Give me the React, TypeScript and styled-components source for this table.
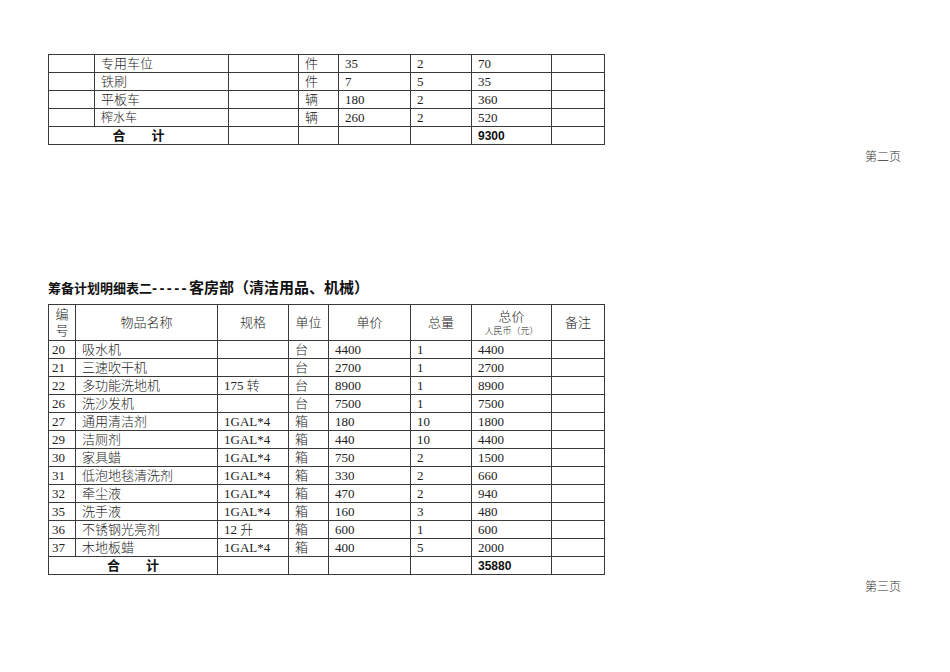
import React from 'react';
import styled, { createGlobalStyle } from 'styled-components';

const GlobalStyle = createGlobalStyle`
  html, body {
    margin: 0;
    padding: 0;
    background: #ffffff;
  }
  body {
    font-family: "Liberation Serif", "Noto Sans CJK SC", serif;
    color: #222;
  }
`;

type Row = {
  no?: string;
  name: string;
  spec?: string;
  unit: string;
  price: string;
  qty: string;
  total: string;
  small?: boolean;
};

const pageTwoRows: Row[] = [
  { name: '专用车位', unit: '件', price: '35', qty: '2', total: '70' },
  { name: '铁刷', unit: '件', price: '7', qty: '5', total: '35' },
  { name: '平板车', unit: '辆', price: '180', qty: '2', total: '360' },
  { name: '榨水车', unit: '辆', price: '260', qty: '2', total: '520', small: true },
];

const pageThreeRows: Row[] = [
  { no: '20', name: '吸水机', unit: '台', price: '4400', qty: '1', total: '4400' },
  { no: '21', name: '三速吹干机', unit: '台', price: '2700', qty: '1', total: '2700' },
  { no: '22', name: '多功能洗地机', spec: '175 转', unit: '台', price: '8900', qty: '1', total: '8900' },
  { no: '26', name: '洗沙发机', unit: '台', price: '7500', qty: '1', total: '7500' },
  { no: '27', name: '通用清洁剂', spec: '1GAL*4', unit: '箱', price: '180', qty: '10', total: '1800' },
  { no: '29', name: '洁厕剂', spec: '1GAL*4', unit: '箱', price: '440', qty: '10', total: '4400' },
  { no: '30', name: '家具蜡', spec: '1GAL*4', unit: '箱', price: '750', qty: '2', total: '1500' },
  { no: '31', name: '低泡地毯清洗剂', spec: '1GAL*4', unit: '箱', price: '330', qty: '2', total: '660' },
  { no: '32', name: '牵尘液', spec: '1GAL*4', unit: '箱', price: '470', qty: '2', total: '940' },
  { no: '35', name: '洗手液', spec: '1GAL*4', unit: '箱', price: '160', qty: '3', total: '480' },
  { no: '36', name: '不锈钢光亮剂', spec: '12 升', unit: '箱', price: '600', qty: '1', total: '600' },
  { no: '37', name: '木地板蜡', spec: '1GAL*4', unit: '箱', price: '400', qty: '5', total: '2000' },
];

const App: React.FC = () => {
  return (
    <Page>
      <GlobalStyle />
      <TableBlock>
        <Sheet>
          <colgroup>
            <col style={{ width: 46 }} />
            <col style={{ width: 134 }} />
            <col style={{ width: 70 }} />
            <col style={{ width: 40 }} />
            <col style={{ width: 72 }} />
            <col style={{ width: 61 }} />
            <col style={{ width: 80 }} />
            <col style={{ width: 53 }} />
          </colgroup>
          <tbody>
            {pageTwoRows.map((row, i) => (
              <tr key={i}>
                <Cell />
                <Cell small={row.small}>{row.name}</Cell>
                <Cell />
                <Cell>{row.unit}</Cell>
                <Cell>{row.price}</Cell>
                <Cell>{row.qty}</Cell>
                <Cell>{row.total}</Cell>
                <Cell />
              </tr>
            ))}
            <tr>
              <TotalLabel colSpan={2}>合　　计</TotalLabel>
              <Cell />
              <Cell />
              <Cell />
              <Cell />
              <TotalValue>9300</TotalValue>
              <Cell />
            </tr>
          </tbody>
        </Sheet>
        <PageMark>第二页</PageMark>
      </TableBlock>

      <TableBlock>
        <Title>
          <TitleLead>筹备计划明细表二</TitleLead>
          <TitleDash>-----</TitleDash>
          <TitleMain>客房部（清洁用品、机械）</TitleMain>
        </Title>
        <Sheet>
          <colgroup>
            <col style={{ width: 27 }} />
            <col style={{ width: 142 }} />
            <col style={{ width: 71 }} />
            <col style={{ width: 40 }} />
            <col style={{ width: 82 }} />
            <col style={{ width: 61 }} />
            <col style={{ width: 80 }} />
            <col style={{ width: 53 }} />
          </colgroup>
          <thead>
            <tr>
              <HeadCell narrow>编<br />号</HeadCell>
              <HeadCell>物品名称</HeadCell>
              <HeadCell>规格</HeadCell>
              <HeadCell>单位</HeadCell>
              <HeadCell>单价</HeadCell>
              <HeadCell>总量</HeadCell>
              <HeadCell>
                总价
                <SubNote>人民币（元）</SubNote>
              </HeadCell>
              <HeadCell>备注</HeadCell>
            </tr>
          </thead>
          <tbody>
            {pageThreeRows.map((row) => (
              <tr key={row.no}>
                <Cell narrow>{row.no}</Cell>
                <Cell>{row.name}</Cell>
                <Cell>{row.spec}</Cell>
                <Cell>{row.unit}</Cell>
                <Cell>{row.price}</Cell>
                <Cell>{row.qty}</Cell>
                <Cell>{row.total}</Cell>
                <Cell />
              </tr>
            ))}
            <tr>
              <TotalLabel colSpan={2}>合　　计</TotalLabel>
              <Cell />
              <Cell />
              <Cell />
              <Cell />
              <TotalValue>35880</TotalValue>
              <Cell />
            </tr>
          </tbody>
        </Sheet>
        <PageMark>第三页</PageMark>
      </TableBlock>
    </Page>
  );
};

const Page = styled.div`
  width: 950px;
  height: 672px;
  box-sizing: border-box;
  padding: 54px 49px 0 48px;
  display: flex;
  flex-direction: column;
  gap: 114px;
`;

const TableBlock = styled.section`
  display: flex;
  flex-direction: column;
`;

const Sheet = styled.table`
  width: 557px;
  border-collapse: collapse;
  table-layout: fixed;
`;

const Cell = styled.td<{ narrow?: boolean; small?: boolean }>`
  border: 1px solid #3a3a3a;
  height: 16px;
  padding: ${p => (p.narrow ? '1px 0 0 3px' : '1px 0 0 6px')};
  font-size: ${p => (p.small ? '12px' : '13px')};
  font-weight: 300;
  line-height: 16px;
  white-space: nowrap;
  overflow: hidden;
  color: #222;
`;

const HeadCell = styled.th<{ narrow?: boolean }>`
  border: 1px solid #3a3a3a;
  height: 35px;
  padding: 0;
  font-size: 13px;
  font-weight: 300;
  line-height: ${p => (p.narrow ? '16px' : '17px')};
  text-align: center;
  vertical-align: middle;
  color: #222;
`;

const SubNote = styled.div`
  font-size: 9px;
  line-height: 12px;
  font-weight: 300;
`;

const TotalLabel = styled.td`
  border: 1px solid #3a3a3a;
  height: 16px;
  padding: 1px 0 0;
  text-align: center;
  font-family: "Liberation Sans", "Noto Sans CJK SC", sans-serif;
  font-size: 13px;
  font-weight: 700;
  line-height: 16px;
  color: #111;
`;

const TotalValue = styled.td`
  border: 1px solid #3a3a3a;
  height: 16px;
  padding: 1px 0 0 6px;
  font-family: "Liberation Sans", "Noto Sans CJK SC", sans-serif;
  font-size: 12px;
  font-weight: 700;
  line-height: 16px;
  color: #111;
`;

const PageMark = styled.div`
  align-self: flex-end;
  margin-top: 3px;
  font-family: "Noto Sans CJK SC", sans-serif;
  font-size: 12px;
  font-weight: 300;
  line-height: 16px;
  color: #333;
`;

const Title = styled.h2`
  margin: 0 0 5px;
  display: flex;
  align-items: baseline;
  font-family: "Liberation Sans", "Noto Sans CJK SC", sans-serif;
  font-weight: 700;
  color: #111;
  line-height: 20px;
`;

const TitleLead = styled.span`
  font-size: 13px;
`;

const TitleDash = styled.span`
  font-size: 15px;
  letter-spacing: 2.4px;
`;

const TitleMain = styled.span`
  font-size: 15px;
`;

export default App;
